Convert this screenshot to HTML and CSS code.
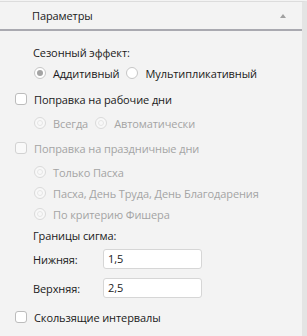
FILE: index.html
```html
<!DOCTYPE html>
<html lang="ru">
<head>
    <meta charset="UTF-8">
    <title>Параметры</title>
    <link rel="stylesheet" href="styles.css">
</head>
<body>
    <div class="panel">
        <div class="panel-header">
            <span class="panel-title">Параметры</span>
            <span class="collapse-arrow"></span>
        </div>

        <div class="panel-body">
            <div class="label season">Сезонный эффект:</div>
            <div class="row indent season-opts">
                <span class="radio checked"></span><span class="caption">Аддитивный</span>
                <span class="radio"></span><span class="caption">Мультипликативный</span>
            </div>

            <div class="row workdays">
                <span class="checkbox"></span><span class="caption">Поправка на рабочие дни</span>
            </div>
            <div class="row indent disabled workdays-opts">
                <span class="radio"></span><span class="caption">Всегда</span>
                <span class="radio"></span><span class="caption">Автоматически</span>
            </div>

            <div class="row disabled holidays">
                <span class="checkbox"></span><span class="caption">Поправка на праздничные дни</span>
            </div>
            <div class="row indent disabled holiday-opt first">
                <span class="radio"></span><span class="caption">Только Пасха</span>
            </div>
            <div class="row indent disabled holiday-opt">
                <span class="radio"></span><span class="caption">Пасха, День Труда, День Благодарения</span>
            </div>
            <div class="row indent disabled holiday-opt">
                <span class="radio"></span><span class="caption">По критерию Фишера</span>
            </div>

            <div class="label sigma">Границы сигма:</div>
            <div class="field lower">
                <span class="field-label">Нижняя:</span>
                <span class="input">1,5</span>
            </div>
            <div class="field upper">
                <span class="field-label">Верхняя:</span>
                <span class="input">2,5</span>
            </div>

            <div class="row sliding">
                <span class="checkbox"></span><span class="caption">Скользящие интервалы</span>
            </div>
        </div>
    </div>
</body>
</html>
```

FILE: styles.css
```css
/* общий фон */
body, html {
    margin: 0;
    padding: 0;
    background: #f3f3f3;
    font-family: "Open Sans", "Noto Sans", sans-serif;
    font-size: 11px;
    letter-spacing: -0.1px;
    color: #1a1a1a;
    overflow: hidden;
}

.panel {
    width: 302px;
    height: 336px;
    border-top: 1px solid #dcdcdc;
    margin-top: 1px;
    border-right: 5px solid #e4e4e4;
}

/* заголовок */
.panel-header {
    height: 27px;
    display: flex;
    align-items: center;
    justify-content: space-between;
    padding: 0 16px 0 32px;
    border-bottom: 2px solid #a9a9b0;
}

.collapse-arrow {
    width: 0;
    height: 0;
    border-left: 3px solid transparent;
    border-right: 3px solid transparent;
    border-bottom: 4px solid #a0a0a0;
}

/* содержимое */
.panel-body {
    padding: 12px 0 0 15px;
}

.label {
    height: 20px;
    line-height: 20px;
    padding-left: 18px;
}

.row {
    height: 20px;
    display: flex;
    align-items: center;
}

.indent {
    padding-left: 19px;
}

.disabled {
    color: #a4a4a4;
}

.caption {
    margin-right: 7px;
}

.season-opts { margin-top: 0; }
.workdays { margin-top: 6px; }
.workdays-opts { margin-top: 4px; }
.holidays { margin-top: 5px; }
.holiday-opt { margin-top: 1px; }
.holiday-opt.first { margin-top: 4px; }
.sigma { margin-top: 2px; }
.lower { margin-top: 3px; }
.upper { margin-top: 9px; }
.sliding { margin-top: 9px; }

.radio {
    width: 10px;
    height: 10px;
    border: 1px solid #c6c6c6;
    border-radius: 50%;
    background: #fff;
    margin-right: 7px;
    position: relative;
}

.radio.checked::after {
    content: "";
    position: absolute;
    left: 2px;
    top: 2px;
    width: 6px;
    height: 6px;
    border-radius: 50%;
    background: #a4a4a4;
}

.disabled .radio {
    border-color: #dadada;
    background: #f8f8f8;
}

.disabled .radio::after {
    content: "";
    position: absolute;
    left: 2px;
    top: 2px;
    width: 4px;
    height: 4px;
    border-radius: 50%;
    border: 1px solid #e6e6e6;
}

.checkbox {
    width: 10px;
    height: 10px;
    border: 1px solid #bcbcbc;
    border-radius: 3px;
    background: #fff;
    margin-right: 7px;
}

.disabled .checkbox {
    border-color: #d2d2d2;
    background: #f9f9f9;
}

/* границы сигма */
.field {
    height: 20px;
    display: flex;
    align-items: center;
    padding-left: 18px;
}

.field-label {
    width: 70px;
}

.input {
    box-sizing: border-box;
    width: 99px;
    height: 20px;
    line-height: 18px;
    padding-left: 4px;
    border: 1px solid #d6d6d6;
    border-radius: 3px;
    background: #fff;
}
```
